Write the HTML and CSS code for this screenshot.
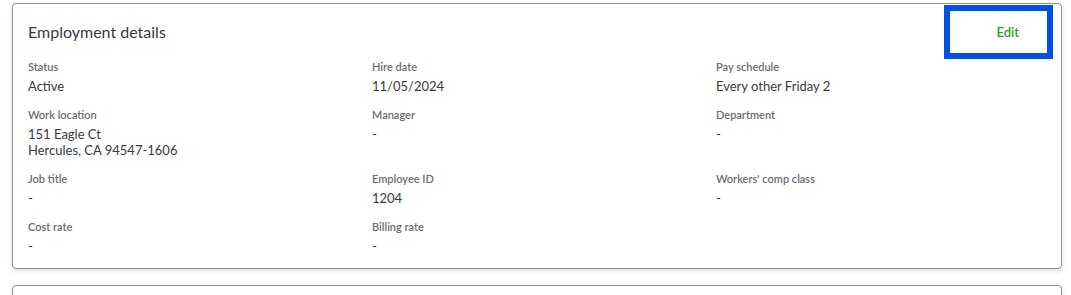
FILE: index.html
```html
<!DOCTYPE html>
<html lang="en">
<head>
<meta charset="utf-8">
<title>Employment details</title>
<link rel="stylesheet" href="styles.css">
</head>
<body>
<div class="page">
  <section class="card">
    <header class="card-header">
      <h2 class="card-title">Employment details</h2>
      <button class="edit-btn" type="button">Edit</button>
    </header>
    <div class="fields">
      <div class="field"><div class="label">Status</div><div class="value">Active</div></div>
      <div class="field"><div class="label">Hire date</div><div class="value">11/05/2024</div></div>
      <div class="field"><div class="label">Pay schedule</div><div class="value">Every other Friday 2</div></div>

      <div class="field"><div class="label">Work location</div><div class="value">151 Eagle Ct<br>Hercules, CA 94547-1606</div></div>
      <div class="field"><div class="label">Manager</div><div class="value">-</div></div>
      <div class="field"><div class="label">Department</div><div class="value">-</div></div>

      <div class="field"><div class="label">Job title</div><div class="value">-</div></div>
      <div class="field"><div class="label">Employee ID</div><div class="value">1204</div></div>
      <div class="field"><div class="label">Workers' comp class</div><div class="value">-</div></div>

      <div class="field"><div class="label">Cost rate</div><div class="value">-</div></div>
      <div class="field"><div class="label">Billing rate</div><div class="value">-</div></div>
    </div>
  </section>
  <section class="card card-next"></section>
</div>
</body>
</html>
```

FILE: styles.css
```css
* { box-sizing: border-box; }

html, body {
  margin: 0;
  padding: 0;
  background: #ffffff;
}

body {
  font-family: Lato, "Open Sans", Arial, sans-serif;
  color: #393a3d;
  height: 295px;
  overflow: hidden;
}

.page {
  padding: 3px 9px 0 12px;
  display: flex;
  flex-direction: column;
  gap: 16px;
}

.card {
  border: 1px solid #8d9096;
  border-radius: 4px;
  background: #fff;
  box-shadow: 0 2px 5px rgba(0, 0, 0, 0.12);
  padding: 3px 8px 14px 15px;
}

.card-next {
  height: 20px;
  padding: 0;
}

.card-header {
  display: flex;
  justify-content: space-between;
  align-items: center;
}

.card-title {
  margin: 0;
  font-size: 16px;
  font-weight: 400;
  line-height: 24px;
  color: #393a3d;
  margin-top: -3px;
}

.edit-btn {
  width: 109px;
  height: 54px;
  border: 6px solid #0050e6;
  background: #fff;
  color: #2ca01c;
  font-family: inherit;
  font-size: 13px;
  font-weight: 600;
  display: flex;
  align-items: center;
  justify-content: flex-end;
  padding: 0 28px 0 0;
  margin-top: -2px;
}

.fields {
  display: grid;
  grid-template-columns: repeat(3, 328px);
  column-gap: 16px;
  row-gap: 13px;
}

.label {
  font-size: 11px;
  line-height: 16px;
  font-weight: 600;
  color: #6b6c72;
}

.value {
  margin-top: 3px;
  font-size: 13px;
  line-height: 16px;
  color: #393a3d;
}
```
